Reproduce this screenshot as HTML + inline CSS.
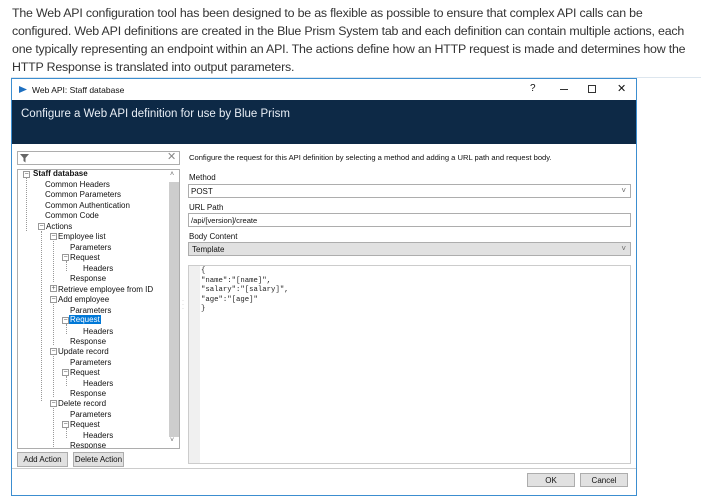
<!DOCTYPE html>
<html><head><style>
*{margin:0;padding:0;box-sizing:border-box}
body{width:715px;height:502px;background:#fff;position:relative;overflow:hidden;font-family:"Liberation Sans",sans-serif}
.p{position:absolute;left:12px;top:4px;font-size:12.4px;line-height:18px;color:#333;letter-spacing:-0.2px;white-space:nowrap}
.a{position:absolute}
.dlg{position:absolute;left:11px;top:78px;width:626px;height:418px;border:1px solid #3c8ed0;background:#fff}
.t{font-size:8px;color:#111;white-space:nowrap}
.tree .t{position:absolute}
.box{position:absolute;border:1px solid #adadad;background:#fff}
.btn{position:absolute;border:1px solid #adadad;background:#e1e1e1;font-size:8px;text-align:center;line-height:13px;color:#111}
.chev{position:absolute;right:4px;top:1px;font-size:8px;color:#666}
.mono{font-family:"Liberation Mono",monospace;font-size:7.3px;line-height:9.5px;color:#222;white-space:pre}
.ex{position:absolute;width:7px;height:7px;border:1px solid #999;background:#fff;font-size:7px;line-height:5px;text-align:center;color:#555}
.dl{position:absolute;border-left:1px dotted #999}
</style></head><body>
<div class="p">The Web API configuration tool has been designed to be as flexible as possible to ensure that complex API calls can be<br>configured. Web API definitions are created in the Blue Prism System tab and each definition can contain multiple actions, each<br>one typically representing an endpoint within an API. The actions define how an HTTP request is made and determines how the<br>HTTP Response is translated into output parameters.</div>
<div class="a" style="left:11px;top:77px;width:690px;height:1px;background:#dde6ee"></div>
<div class="dlg">
 <svg class="a" style="left:6px;top:6px" width="10" height="9"><path d="M1 1L9 4.5L1 8Z" fill="#1d6fc0"/></svg>
 <div class="a t" style="left:20px;top:6px;font-size:8.5px">Web API: Staff database</div>
 <div class="a t" style="left:518px;top:4px;font-size:10px">?</div>
 <div class="a" style="left:548px;top:10px;width:8px;height:1px;background:#333"></div>
 <div class="a" style="left:576px;top:6px;width:8px;height:8px;border:1px solid #333"></div>
 <div class="a t" style="left:605px;top:3px;font-size:11px">✕</div>
 <div class="a" style="left:0;top:21px;width:624px;height:44px;background:#0d2946"></div>
 <div class="a" style="left:9px;top:29px;font-size:11.5px;color:#e8eef5;white-space:nowrap">Configure a Web API definition for use by Blue Prism</div>
 <div class="box" style="left:5px;top:72px;width:163px;height:14px"></div>
 <svg class="a" style="left:8px;top:75px" width="9" height="9"><path d="M0 0H9L5.5 4V8.5L3.5 7V4Z" fill="#666"/></svg>
 <div class="a" style="left:155px;top:71px;font-size:11px;color:#888">✕</div>
 <div class="box tree" style="left:5px;top:90px;width:163px;height:280px;overflow:hidden">
  <div class="a" style="left:150px;top:0;width:11px;height:278px;background:#fff"></div>
  <div class="a" style="left:151px;top:12px;width:10px;height:255px;background:#cdcdcd"></div>
  <div class="a t" style="left:152px;top:1px;font-size:7px;color:#666">˄</div>
  <div class="a t" style="left:152px;top:267px;font-size:7px;color:#666">˅</div>
  <div class="dl" style="left:8px;top:8px;height:53px"></div>
  <div class="dl" style="left:23px;top:61px;height:170px"></div>
  <div class="dl" style="left:35px;top:71px;height:41px"></div>
  <div class="dl" style="left:35px;top:134px;height:41px"></div>
  <div class="dl" style="left:35px;top:186px;height:41px"></div>
  <div class="dl" style="left:35px;top:238px;height:45px"></div>
  <div class="dl" style="left:48px;top:91px;height:10px"></div>
  <div class="dl" style="left:48px;top:154px;height:10px"></div>
  <div class="dl" style="left:48px;top:206px;height:10px"></div>
  <div class="dl" style="left:48px;top:258px;height:10px"></div>
  <div class="ex" style="left:5px;top:1px">−</div><div class="t" style="left:15px;top:-1px;font-weight:bold">Staff database</div>
  <div class="t" style="left:27px;top:9.5px">Common Headers</div>
  <div class="t" style="left:27px;top:20px">Common Parameters</div>
  <div class="t" style="left:27px;top:30.5px">Common Authentication</div>
  <div class="t" style="left:27px;top:41px">Common Code</div>
  <div class="ex" style="left:20px;top:53px">−</div><div class="t" style="left:28px;top:51.5px">Actions</div>
  <div class="ex" style="left:32px;top:63px">−</div><div class="t" style="left:40px;top:62px">Employee list</div>
  <div class="t" style="left:52px;top:72.5px">Parameters</div>
  <div class="ex" style="left:44px;top:84px">−</div><div class="t" style="left:52px;top:83px">Request</div>
  <div class="t" style="left:65px;top:93.5px">Headers</div>
  <div class="t" style="left:52px;top:104px">Response</div>
  <div class="ex" style="left:32px;top:115px">+</div><div class="t" style="left:40px;top:114.5px">Retrieve employee from ID</div>
  <div class="ex" style="left:32px;top:126px">−</div><div class="t" style="left:40px;top:125px">Add employee</div>
  <div class="t" style="left:52px;top:135.5px">Parameters</div>
  <div class="ex" style="left:44px;top:147px">−</div><div class="t" style="left:51px;top:145px;background:#0078d7;color:#fff;padding:0 1px">Request</div>
  <div class="t" style="left:65px;top:156.5px">Headers</div>
  <div class="t" style="left:52px;top:167px">Response</div>
  <div class="ex" style="left:32px;top:178px">−</div><div class="t" style="left:40px;top:177px">Update record</div>
  <div class="t" style="left:52px;top:187.5px">Parameters</div>
  <div class="ex" style="left:44px;top:199px">−</div><div class="t" style="left:52px;top:198px">Request</div>
  <div class="t" style="left:65px;top:208.5px">Headers</div>
  <div class="t" style="left:52px;top:219px">Response</div>
  <div class="ex" style="left:32px;top:230px">−</div><div class="t" style="left:40px;top:229px">Delete record</div>
  <div class="t" style="left:52px;top:239.5px">Parameters</div>
  <div class="ex" style="left:44px;top:251px">−</div><div class="t" style="left:52px;top:250px">Request</div>
  <div class="t" style="left:65px;top:260.5px">Headers</div>
  <div class="t" style="left:52px;top:271px">Response</div>
 </div>
 <div class="btn" style="left:5px;top:373px;width:51px;height:15px">Add Action</div>
 <div class="btn" style="left:61px;top:373px;width:51px;height:15px">Delete Action</div>
 <div class="a" style="left:170px;top:220px;color:#aaa;font-size:6px;line-height:4px">·<br>·<br>·</div>
 <div class="a t" style="left:177px;top:74px;font-size:7.6px">Configure the request for this API definition by selecting a method and adding a URL path and request body.</div>
 <div class="a t" style="left:177px;top:94px">Method</div>
 <div class="box" style="left:176px;top:105px;width:443px;height:14px"><div class="t" style="position:absolute;left:2px;top:2px">POST</div><div class="chev">˅</div></div>
 <div class="a t" style="left:177px;top:124px">URL Path</div>
 <div class="box" style="left:176px;top:134px;width:443px;height:14px"><div class="t" style="position:absolute;left:2px;top:2px;font-size:7.6px">/api/[version]/create</div></div>
 <div class="a t" style="left:177px;top:153px">Body Content</div>
 <div class="box" style="left:176px;top:163px;width:443px;height:14px;background:#e1e1e1"><div class="t" style="position:absolute;left:3px;top:2px">Template</div><div class="chev">˅</div></div>
 <div class="box" style="left:176px;top:186px;width:443px;height:199px;border-color:#ccc"><div class="a" style="left:0;top:0;width:11px;height:197px;background:#f0f0f0"></div><div class="a mono" style="left:12px;top:1px">{
"name":"[name]",
"salary":"[salary]",
"age":"[age]"
}</div></div>
 <div class="a" style="left:0;top:389px;width:624px;height:1px;background:#ccc"></div>
 <div class="btn" style="left:515px;top:394px;width:48px;height:14px">OK</div>
 <div class="btn" style="left:568px;top:394px;width:48px;height:14px">Cancel</div>
</div>
</body></html>
